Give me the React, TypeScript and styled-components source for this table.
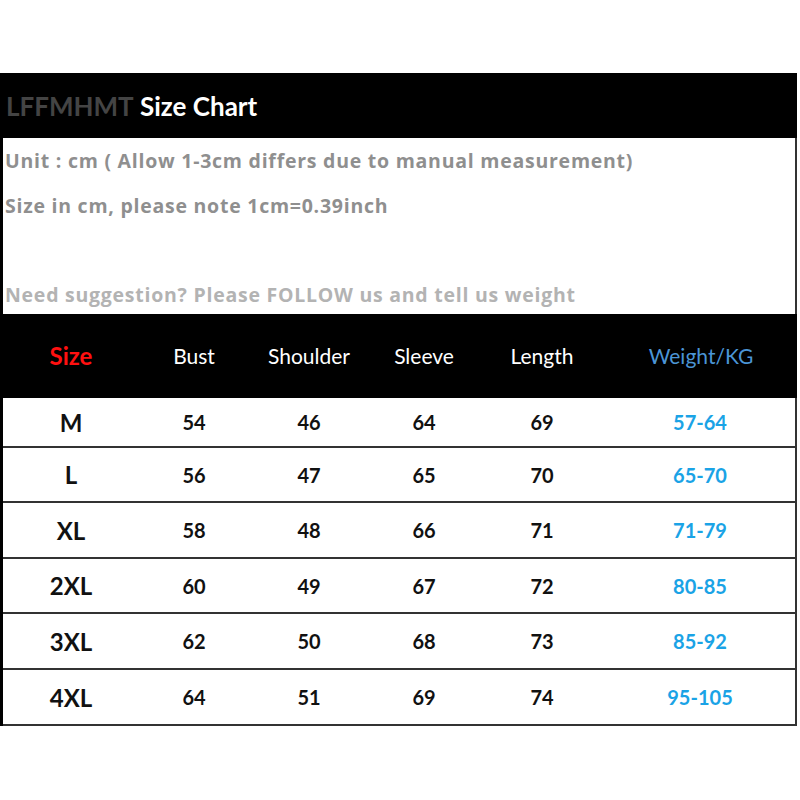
import React from "react";
import styled, { createGlobalStyle } from "styled-components";

const Global = createGlobalStyle`
  html, body { margin: 0; padding: 0; background: #fff; }
  body { font-family: "Lato", "Open Sans", sans-serif; }
`;

const Chart = styled.div`
  margin-top: 73px;
  width: 797px;
  background: #000;
  padding-left: 3px;
  box-sizing: border-box;
  display: flex;
  flex-direction: column;
`;

const TitleBar = styled.div`
  height: 65px;
  display: flex;
  align-items: center;
  padding-left: 3px;
  font-size: 26px;
  font-weight: 700;
  color: #fff;
  white-space: pre;
`;

const Brand = styled.span`
  color: #444;
`;

const InfoBox = styled.div`
  background: #fff;
  height: 176px;
  border-right: 2px solid #333;
  box-sizing: border-box;
  display: flex;
  flex-direction: column;
  padding: 10px 0 0 2px;
`;

const InfoLine = styled.div<{ $light?: boolean; $gap?: number }>`
  font-family: "Open Sans", "Lato", sans-serif;
  font-size: 19.5px;
  font-weight: 700;
  line-height: 26px;
  letter-spacing: 0.75px;
  color: ${(p) => (p.$light ? "#b3b3b3" : "#8f8f8f")};
  margin-top: ${(p) => p.$gap ?? 0}px;
`;

const cols = "136px 110px 120px 110px 126px 1fr";

const HeaderRow = styled.div`
  height: 84px;
  display: grid;
  grid-template-columns: ${cols};
  align-items: center;
  padding-bottom: 2px;
  box-sizing: border-box;
`;

const HeadCell = styled.div<{ $tone?: "red" | "blue" }>`
  text-align: center;
  font-size: 21px;
  font-weight: ${(p) => (p.$tone === "red" ? 700 : 400)};
  color: ${(p) =>
    p.$tone === "red" ? "#ff1010" : p.$tone === "blue" ? "#4b95d6" : "#fff"};
  ${(p) => (p.$tone === "red" ? "font-size: 24px;" : "")}
`;

const Row = styled.div<{ $h: number; $first?: boolean }>`
  height: ${(p) => p.$h}px;
  display: grid;
  grid-template-columns: ${cols};
  align-items: center;
  background: #fff;
  border-right: 2px solid #333;
  border-top: ${(p) => (p.$first ? "0" : "2px solid #333")};
  box-sizing: border-box;
`;

const Cell = styled.div<{ $kind?: "size" | "weight" }>`
  text-align: center;
  font-weight: 700;
  font-size: ${(p) => (p.$kind === "size" ? "24px" : "20px")};
  color: ${(p) => (p.$kind === "weight" ? "#1aa3e6" : "#111")};
`;

const BottomEdge = styled.div`
  height: 2px;
  background: #333;
`;

const rows = [
  { size: "M", v: ["54", "46", "64", "69"], w: "57-64", h: 48 },
  { size: "L", v: ["56", "47", "65", "70"], w: "65-70", h: 55 },
  { size: "XL", v: ["58", "48", "66", "71"], w: "71-79", h: 56 },
  { size: "2XL", v: ["60", "49", "67", "72"], w: "80-85", h: 55 },
  { size: "3XL", v: ["62", "50", "68", "73"], w: "85-92", h: 56 },
  { size: "4XL", v: ["64", "51", "69", "74"], w: "95-105", h: 56 },
];

export default function App() {
  return (
    <>
      <Global />
      <Chart>
        <TitleBar>
          <Brand>LFFMHMT</Brand> Size Chart
        </TitleBar>
        <InfoBox>
          <InfoLine>Unit : cm ( Allow 1-3cm differs due to manual measurement)</InfoLine>
          <InfoLine $gap={19}>Size in cm, please note 1cm=0.39inch</InfoLine>
          <InfoLine $light $gap={63}>
            Need suggestion? Please FOLLOW us and tell us weight
          </InfoLine>
        </InfoBox>
        <HeaderRow>
          <HeadCell $tone="red">Size</HeadCell>
          <HeadCell>Bust</HeadCell>
          <HeadCell>Shoulder</HeadCell>
          <HeadCell>Sleeve</HeadCell>
          <HeadCell>Length</HeadCell>
          <HeadCell $tone="blue">Weight/KG</HeadCell>
        </HeaderRow>
        {rows.map((r, i) => (
          <Row key={r.size} $h={r.h} $first={i === 0}>
            <Cell $kind="size">{r.size}</Cell>
            {r.v.map((x, j) => (
              <Cell key={j}>{x}</Cell>
            ))}
            <Cell $kind="weight">{r.w}</Cell>
          </Row>
        ))}
        <BottomEdge />
      </Chart>
    </>
  );
}
